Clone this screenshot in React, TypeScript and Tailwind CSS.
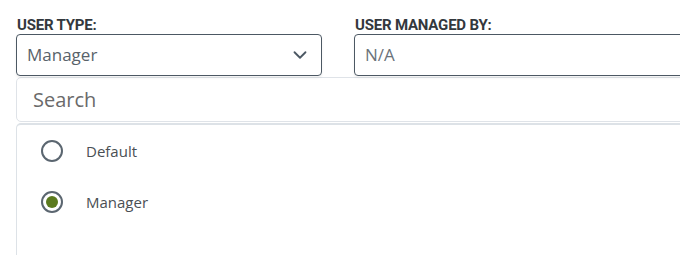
import { ChevronDown } from "lucide-react";

const options = [
  { label: "Default", checked: false },
  { label: "Manager", checked: true },
];

function Radio({ checked }: { checked: boolean }) {
  return (
    <span className="flex h-[22px] w-[22px] items-center justify-center rounded-full border-2 border-[#5b6670] bg-white">
      {checked && <span className="h-[12px] w-[12px] rounded-full bg-[#5b7a1e]" />}
    </span>
  );
}

export default function App() {
  return (
    <main className="h-[255px] w-[680px] overflow-hidden bg-white font-['Open_Sans',sans-serif]">
      <div className="flex gap-[32px] pl-[16px] pt-[16px]">
        <div className="w-[306px] shrink-0">
          <div className="pl-[1px] font-['Roboto',sans-serif] text-[15px] font-bold leading-[18px] tracking-[-0.2px] text-[#33383d]">
            USER TYPE:
          </div>
          <div className="flex h-[42px] items-center justify-between rounded-[4px] border border-[#4c5863] pl-[10px] pr-[10px] text-[17px] text-[#59626a] shadow-[0_2px_3px_rgba(0,0,0,0.06)]">
            <span>Manager</span>
            <ChevronDown size={22} strokeWidth={2} className="text-[#4c5863]" />
          </div>
        </div>
        <div className="w-[360px] shrink-0">
          <div className="pl-[1px] font-['Roboto',sans-serif] text-[15px] font-bold leading-[18px] tracking-[-0.2px] text-[#33383d]">
            USER MANAGED BY:
          </div>
          <div className="flex h-[42px] items-center rounded-[4px] border border-[#4c5863] pl-[10px] text-[17px] text-[#6b737a] shadow-[0_2px_3px_rgba(0,0,0,0.06)]">
            N/A
          </div>
        </div>
      </div>

      <div className="ml-[16px] mt-[1px] w-[700px]">
        <div className="flex h-[45px] items-center rounded-[5px] border border-[#dfe3e8] pl-[16px] text-[20px] text-[#6a6a6a]">
          Search
        </div>
        <div className="mt-[1px] h-[140px] rounded-tl-[5px] border-l border-t-2 border-[#dde2e7]">
          <div className="flex flex-col gap-[29px] pl-[24px] pt-[15px]">
            {options.map((o) => (
              <div key={o.label} className="flex h-[22px] items-center gap-[23px]">
                <Radio checked={o.checked} />
                <span className="text-[15px] text-[#4a4f54]">{o.label}</span>
              </div>
            ))}
          </div>
        </div>
      </div>
    </main>
  );
}
